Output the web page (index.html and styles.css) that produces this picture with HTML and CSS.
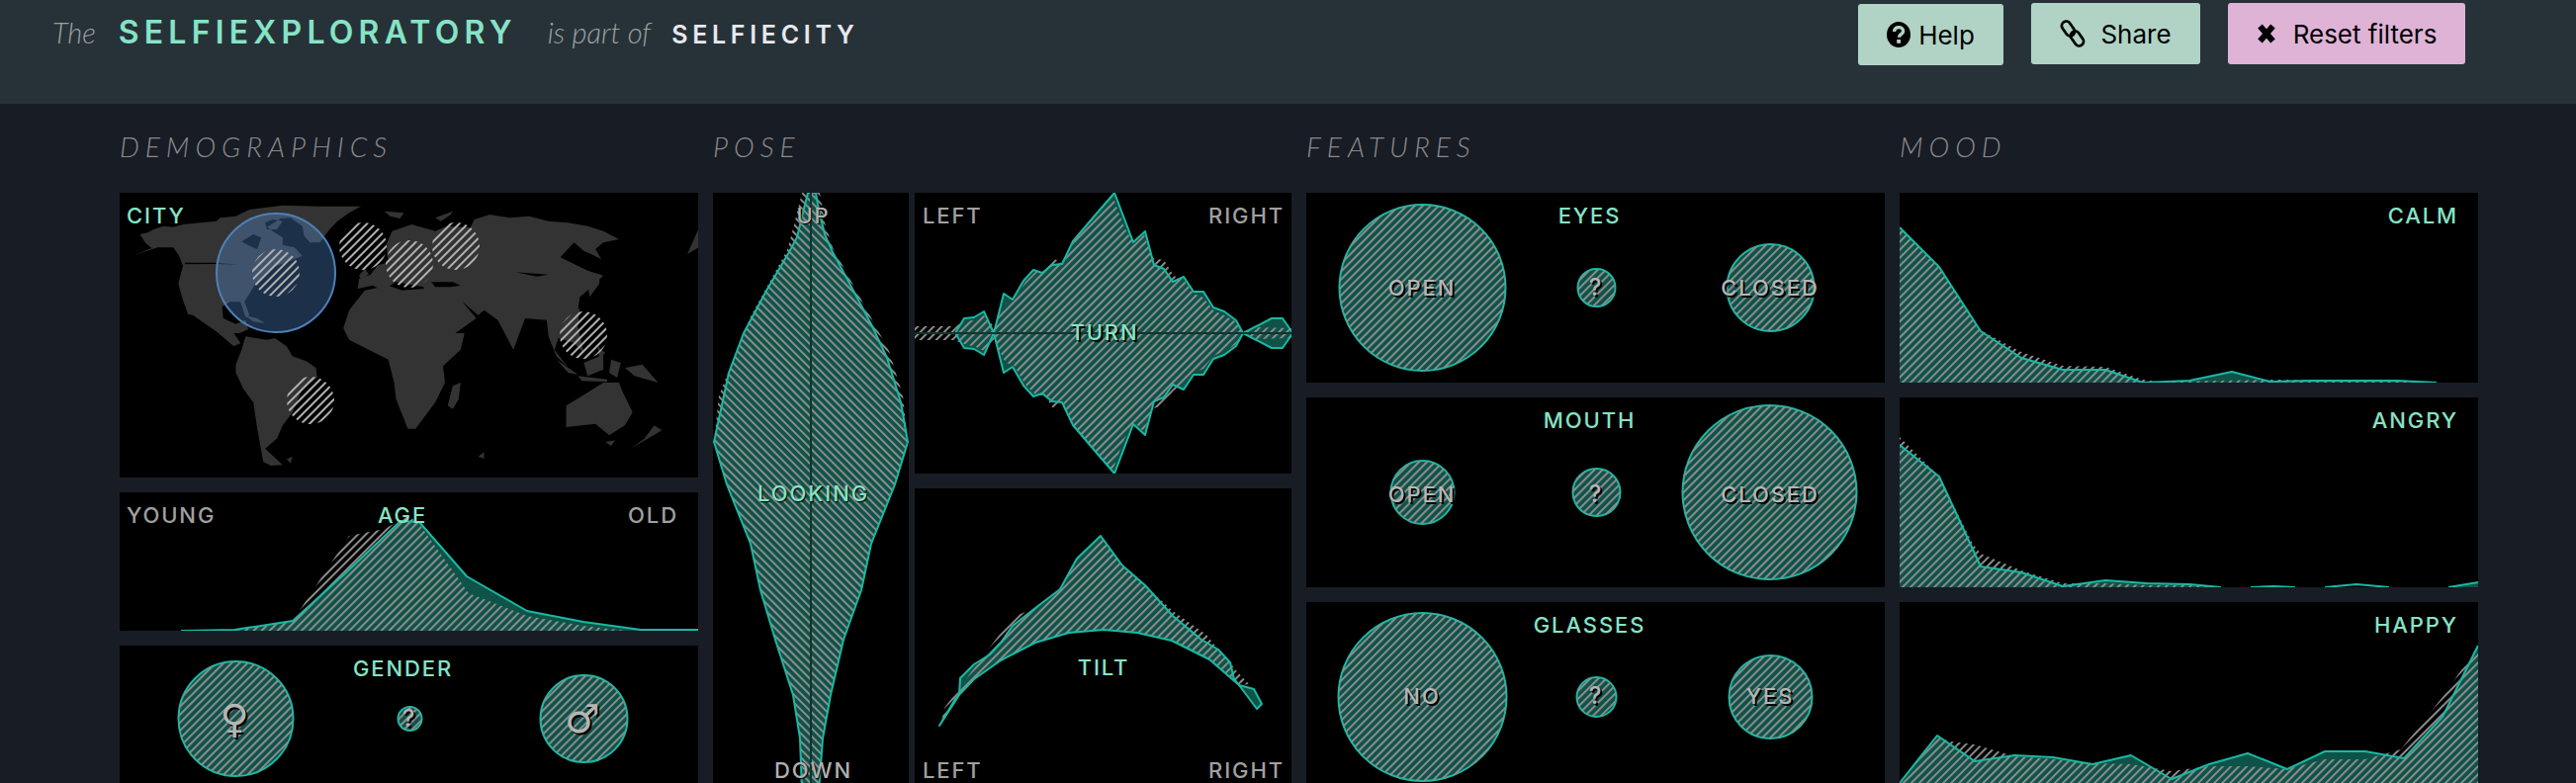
FILE: index.html
```html
<!DOCTYPE html>
<html lang="en">
<head>
  <meta charset="UTF-8" />
  <title>Selfiexploratory</title>
  <link rel="stylesheet" href="styles.css">
</head>
<body>
  <svg class="defs" width="0" height="0">
    <defs>
      <pattern id="hatch" width="5.7" height="5.7" patternUnits="userSpaceOnUse" patternTransform="rotate(45)">
        <rect width="2" height="5.7" fill="#8c8c8c" />
      </pattern>
      <pattern id="hatch-back" width="5.7" height="5.7" patternUnits="userSpaceOnUse" patternTransform="rotate(-45)">
        <rect width="2" height="5.7" fill="#8c8c8c" />
      </pattern>
      <pattern id="hatch-map" width="6" height="6" patternUnits="userSpaceOnUse" patternTransform="rotate(45)">
        <rect width="2" height="6" fill="#b0b0b0" />
      </pattern>
    </defs>
  </svg>

  <header class="topbar">
    <div class="title">
      <span class="title-note">The</span>
      <span class="title-main">SELFIEXPLORATORY</span>
      <span class="title-note">is part of</span>
      <span class="title-parent">SELFIECITY</span>
    </div>
    <div class="actions">
      <button class="btn btn-help">
        <svg class="icon" width="24" height="28" viewBox="0 0 24 28"><ellipse cx="12" cy="14" rx="12" ry="13" /><path class="icon-cut" d="M7.5 11c.3-3 2.2-4.4 4.6-4.4 2.6 0 4.5 1.6 4.5 3.8 0 3.3-4.2 3.3-4.2 6.4" /><rect class="icon-dot" x="10.2" y="19" width="3.8" height="3.8" /></svg>
        Help
      </button>
      <button class="btn btn-share">
        <svg class="icon icon-line" width="26" height="28" viewBox="0 0 26 28"><rect x="4" y="1" width="9" height="16" rx="4.5" transform="rotate(-35 8.5 9)" /><rect x="13" y="11" width="9" height="16" rx="4.5" transform="rotate(-35 17.5 19)" /></svg>
        Share
      </button>
      <button class="btn btn-reset">
        <svg class="icon icon-x" width="20" height="28" viewBox="0 0 20 28"><path d="M3.5 6.5l13 15M16.5 6.5l-13 15" /></svg>
        Reset filters
      </button>
    </div>
  </header>

  <main class="board">
    <section class="group">
      <h2>DEMOGRAPHICS</h2>
      <div class="stack">
        <div class="panel panel-map">
          <svg class="chart" viewBox="0 0 585 288">
            <g class="land" transform="scale(.3954 .3333) translate(-53 -14)">
              <path fill-rule="evenodd" d="M92 203L135 182 118 165 105 140 125 135 140 125 165 115 190 118 215 110 260 105 300 100 310 90 350 85 385 65 420 60 470 52 560 55 670 55 640 75 610 100 590 125 565 165 540 165 525 145 520 115 490 90 465 92 430 118 450 135 470 150 470 172 500 180 520 205 480 225 445 240 430 258 400 290 385 320 372 345 385 385 375 392 362 345 335 345 315 360 318 395 350 412 375 400 382 428 360 440 345 440 362 470 345 480 300 435 270 410 240 385 228 382 215 340 203 290 215 235 205 205 190 180 150 180ZM365 162L395 140 415 150 405 185 385 175ZM220 226L300 226 360 232 300 230 220 231ZM425 105L445 95 470 100 455 125 430 125Z" />
              <path d="M372 385L405 395 425 410 395 405Z" />
              <path d="M375 450L430 460 450 455 480 480 495 510 530 525 555 545 558 575 520 610 505 650 495 680 470 720 455 760 425 790 470 840 440 842 420 830 405 730 395 650 370 610 350 560 350 535 365 490Z" />
              <path d="M640 370L680 310 740 295 775 310 830 305 860 320 875 370 890 400 900 440 935 440 925 490 880 540 885 590 860 650 810 730 790 730 760 640 755 590 740 520 690 490 640 460 625 425Z" />
              <path d="M905 600L925 590 920 640 905 670 892 660Z" />
              <path fill-rule="evenodd" d="M662 305L665 275 695 262 712 235 740 225 735 170 750 130 800 110 860 130 890 115 950 120 960 95 1000 80 1050 90 1100 85 1150 100 1200 105 1250 115 1290 130 1330 155 1290 165 1270 185 1285 215 1240 190 1215 165 1180 210 1250 250 1290 265 1260 300 1230 330 1225 370 1230 360 1225 420 1240 500 1215 470 1175 455 1165 490 1200 545 1170 510 1150 450 1145 400 1090 395 1060 490 1020 400 985 370 970 385 930 345 965 395 900 450 880 400 860 330 835 325 830 300 760 285 725 310 700 295ZM850 285L905 285 925 295 900 300 860 300ZM1065 255L1150 262 1120 268Z" />
              <path d="M1250 290L1280 260 1280 290 1255 330Z" />
              <path d="M665 265L680 245 690 260 672 280Z" />
              <path d="M1505 200L1533 125 1533 180Z" />
              <path d="M730 70L780 75 770 92 745 85Z" />
              <path d="M860 90L905 70 900 80 875 100Z" />
              <path d="M1140 480L1200 560 1225 565 1170 520Z" />
              <path d="M1225 570L1300 580 1300 588 1235 585Z" />
              <path d="M1240 530L1290 505 1290 550 1250 570Z" />
              <path d="M1310 520L1335 530 1325 575 1305 560Z" />
              <path d="M1275 480L1295 500 1280 515Z" />
              <path d="M1345 545L1390 535 1430 590 1370 570Z" />
              <path d="M1195 660L1250 620 1290 590 1330 590 1340 620 1365 680 1345 720 1305 750 1270 715 1195 725Z" />
              <path d="M1360 790L1440 735 1420 720 1395 760Z" />
              <path d="M1295 770L1320 765 1310 782Z" />
              <path d="M970 815L985 800 985 820Z" />
              <path d="M480 822L495 815 490 835Z" />
            </g>
            <circle class="city-pick" cx="158" cy="81" r="60" />
            <g class="city-spot">
              <circle cx="158" cy="81" r="24" />
              <circle cx="246" cy="54" r="24" />
              <circle cx="293" cy="72" r="24" />
              <circle cx="340" cy="54" r="24" />
              <circle cx="469" cy="144" r="24" />
              <circle cx="193" cy="210" r="24" />
            </g>
          </svg>
          <div class="labels"><span class="mint">CITY</span><span></span><span></span></div>
        </div>

        <div class="panel panel-age">
          <svg class="chart" viewBox="0 0 585 140">
            <path class="area" d="M62 140L116 139 175 130 228 82 284 29 303 30 351 85 412 120 469 131 527 139 585 139 585 140Z" />
            <path class="hatch" d="M116 140L175 130 232 44 268 37 292 24 303 32 353 102 412 125 469 135 513 140Z" />
            <path class="line" d="M62 140L116 139 175 130 228 82 284 29 303 30 351 85 412 120 469 131 527 139 585 139" />
          </svg>
          <div class="labels"><span>YOUNG</span><span class="mint">AGE</span><span class="end">OLD</span></div>
        </div>

        <div class="panel panel-short">
          <svg class="chart" viewBox="0 0 585 148">
            <g class="bubble">
              <circle cx="117" cy="74" r="58" /><circle class="hatch" cx="117" cy="74" r="58" />
              <circle cx="293" cy="74" r="12" /><circle class="hatch" cx="293" cy="74" r="12" />
              <circle cx="469" cy="74" r="44" /><circle class="hatch" cx="469" cy="74" r="44" />
            </g>
          </svg>
          <div class="labels"><span></span><span class="mint">GENDER</span><span></span></div>
          <div class="marks">
            <span class="mark mark-glyph">♀</span><span class="mark mark-q">?</span><span class="mark mark-glyph">♂</span>
          </div>
        </div>
      </div>
    </section>

    <section class="group">
      <h2>POSE</h2>
      <div class="pose">
        <div class="panel panel-looking">
          <svg class="chart" viewBox="0 0 198 606">
            <path class="area" d="M99 0L104 0 106 12 113 42 121 60 142 99 161 135 176 167 190 212 197 252 184 295 160 355 150 402 132 452 119 508 111 552 107 606 90 606 88 552 81 508 63 452 48 402 38 355 14 295 1 252 16 182 31 142 54 99 77 60 85 45 92 16 96 0Z" />
            <path class="hatch-b" d="M90 0L108 0 113 30 121 55 162 130 178 160 192 205 197 252 184 295 160 355 150 402 132 452 119 508 111 552 107 606 90 606 88 552 81 508 63 452 48 402 38 355 14 295 1 252 6 205 24 160 38 125 75 58 80 40Z" />
            <path class="line" d="M99 0L104 0 106 12 113 42 121 60 142 99 161 135 176 167 190 212 197 252 184 295 160 355 150 402 132 452 119 508 111 552 107 606 90 606 88 552 81 508 63 452 48 402 38 355 14 295 1 252 16 182 31 142 54 99 77 60 85 45 92 16 96 0Z" />
            <path class="axis" d="M99 0V606" />
          </svg>
          <div class="pose-labels">
            <span>UP</span>
            <span class="mint shadow">LOOKING</span>
            <span>DOWN</span>
          </div>
        </div>
        <div class="pose-side">
          <div class="panel panel-turn">
            <svg class="chart" viewBox="0 0 381 284">
              <path class="area" d="M41 142L50 127 60 126 70 120 80 142 90 102 99 108 110 89 120 78 129 81 139 73 149 72 160 49 183 22 202 0 221 50 233 39 242 73 252 77 261 90 272 85 282 100 292 100 302 116 313 120 325 129 332 142 361 127 372 127 381 140 381 144 372 157 361 157 332 142 325 155 313 164 302 168 292 184 282 184 272 199 261 194 252 207 242 211 233 245 221 234 202 284 183 262 160 235 149 212 139 211 129 203 120 206 110 195 99 176 90 182 80 142 70 164 60 158 50 157Z" />
              <path class="hatch" d="M0 135L40 135 50 131 62 128 70 124 80 135 92 112 100 110 112 90 122 80 132 78 140 66 150 72 162 47 185 20 200 3 212 35 222 52 232 42 240 66 252 68 262 84 272 88 282 102 292 106 302 119 313 124 324 130 332 142 345 136 381 137 381 147 345 148 332 142 324 154 313 160 302 165 292 178 282 182 272 196 262 200 252 216 240 218 232 242 222 232 212 249 200 281 185 264 162 237 150 212 140 218 132 206 122 204 112 194 100 174 92 172 80 149 70 160 62 156 50 153 40 149 0 149Z" />
              <path class="line" d="M41 142L50 127 60 126 70 120 80 142 90 102 99 108 110 89 120 78 129 81 139 73 149 72 160 49 183 22 202 0 221 50 233 39 242 73 252 77 261 90 272 85 282 100 292 100 302 116 313 120 325 129 332 142 361 127 372 127 381 140 381 144 372 157 361 157 332 142 325 155 313 164 302 168 292 184 282 184 272 199 261 194 252 207 242 211 233 245 221 234 202 284 183 262 160 235 149 212 139 211 129 203 120 206 110 195 99 176 90 182 80 142 70 164 60 158 50 157Z" />
              <path class="axis" d="M0 142H381" />
            </svg>
            <div class="labels labels-wide"><span>LEFT</span><span></span><span class="end">RIGHT</span></div>
            <div class="label-middle mint shadow">TURN</div>
          </div>
          <div class="panel panel-tilt">
            <svg class="chart" viewBox="0 0 381 307">
              <path class="area" d="M25 240L45 209 46 192 60 178 76 168 87 156 99 139 122 121 147 102 164 71 188 48 210 78 233 98 261 129 290 153 307 163 319 176 323 193 328 199 343 203 351 218 346 223 328 199 298 173 260 154 225 146 191 143 156 146 122 156 87 174 60 193 41 213Z" />
              <path class="hatch" d="M30 222L99 130 122 121 147 102 164 71 188 48 210 78 233 98 261 124 295 148 307 163 319 176 324 183 338 198 328 199 298 173 260 154 225 146 191 143 156 146 122 156 87 174 60 193 41 213 27 236Z" />
              <path class="line" d="M25 240L45 209 46 192 60 178 76 168 87 156 99 139 122 121 147 102 164 71 188 48 210 78 233 98 261 129 290 153 307 163 319 176 323 193 328 199 343 203 351 218 346 223 328 199 298 173 260 154 225 146 191 143 156 146 122 156 87 174 60 193 41 213Z" />
            </svg>
            <div class="tilt-labels">
              <div class="label-tilt mint">TILT</div>
              <div class="labels-foot"><span>LEFT</span><span>RIGHT</span></div>
            </div>
          </div>
        </div>
      </div>
    </section>

    <section class="group">
      <h2>FEATURES</h2>
      <div class="rows">
        <div class="panel">
          <svg class="chart" viewBox="0 0 585 192">
            <g class="bubble">
              <circle cx="117" cy="96" r="84" /><circle class="hatch" cx="117" cy="96" r="84" />
              <circle cx="293" cy="96" r="19" /><circle class="hatch" cx="293" cy="96" r="19" />
              <circle cx="469" cy="96" r="44" /><circle class="hatch" cx="469" cy="96" r="44" />
            </g>
          </svg>
          <div class="labels"><span></span><span class="mint">EYES</span><span></span></div>
          <div class="marks"><span class="mark">OPEN</span><span class="mark mark-q">?</span><span class="mark">CLOSED</span></div>
        </div>
        <div class="panel">
          <svg class="chart" viewBox="0 0 585 192">
            <g class="bubble">
              <circle cx="117" cy="96" r="32" /><circle class="hatch" cx="117" cy="96" r="32" />
              <circle cx="293" cy="96" r="24" /><circle class="hatch" cx="293" cy="96" r="24" />
              <circle cx="468" cy="96" r="88" /><circle class="hatch" cx="468" cy="96" r="88" />
            </g>
          </svg>
          <div class="labels"><span></span><span class="mint">MOUTH</span><span></span></div>
          <div class="marks marks-low"><span class="mark">OPEN</span><span class="mark mark-q">?</span><span class="mark">CLOSED</span></div>
        </div>
        <div class="panel">
          <svg class="chart" viewBox="0 0 585 192">
            <g class="bubble">
              <circle cx="117" cy="96" r="85" /><circle class="hatch" cx="117" cy="96" r="85" />
              <circle cx="293" cy="96" r="20" /><circle class="hatch" cx="293" cy="96" r="20" />
              <circle cx="469" cy="96" r="42" /><circle class="hatch" cx="469" cy="96" r="42" />
            </g>
          </svg>
          <div class="labels"><span></span><span class="mint">GLASSES</span><span></span></div>
          <div class="marks marks-high"><span class="mark">NO</span><span class="mark mark-q">?</span><span class="mark">YES</span></div>
        </div>
      </div>
    </section>

    <section class="group">
      <h2>MOOD</h2>
      <div class="rows">
        <div class="panel">
          <svg class="chart" viewBox="0 0 585 192">
            <path class="area" d="M0 35L40 75 82 140 123 167 165 179 208 179 246 192 293 190 336 181 375 191 416 190 503 190 543 192 585 192 585 192 0 192Z" />
            <path class="hatch" d="M0 35L40 75 82 139 123 161 165 175 208 176 246 189 262 191 385 189 542 191 542 192 0 192Z" />
            <path class="line" d="M0 35L40 75 82 140 123 167 165 179 208 179 246 192 293 190 336 181 375 191 416 190 503 190 543 192" />
          </svg>
          <div class="labels"><span></span><span></span><span class="end mint">CALM</span></div>
        </div>
        <div class="panel">
          <svg class="chart" viewBox="0 0 585 192">
            <path class="area" d="M0 48L40 80 82 171 123 177 165 191 208 185 250 188 293 189 325 192 585 192 585 187 555 192 0 192Z" />
            <path class="hatch" d="M0 40L40 80 74 148 82 158 123 175 165 188 208 188 250 190 293 190 320 192 0 192Z" />
            <path class="line" d="M0 48L40 80 82 171 123 177 165 191 208 185 250 188 293 189 325 192M355 192L378 191 400 192M430 192L462 189 495 192M555 192L585 187" />
          </svg>
          <div class="labels"><span></span><span></span><span class="end mint">ANGRY</span></div>
        </div>
        <div class="panel">
          <svg class="chart" viewBox="0 0 585 192">
            <path class="area" d="M0 183L38 135 76 161 116 155 155 157 195 164 234 155 275 179 313 164 352 153 392 169 430 151 471 151 510 158 549 116 585 44 585 192 0 192Z" />
            <path class="hatch" d="M0 183L38 137 52 141 76 144 116 156 155 159 195 163 234 164 275 171 313 166 352 166 392 169 430 159 471 159 507 149 549 96 585 44 585 192 0 192Z" />
            <path class="line" d="M0 183L38 135 76 161 116 155 155 157 195 164 234 155 275 179 313 164 352 153 392 169 430 151 471 151 510 158 549 116 585 44" />
          </svg>
          <div class="labels"><span></span><span></span><span class="end mint">HAPPY</span></div>
        </div>
      </div>
    </section>
  </main>
</body>
</html>
```

FILE: styles.css
```css
* {
  box-sizing: border-box;
}

html, body {
  height: 100%;
}

body {
  margin: 0;
  overflow: hidden;
  background: #181c25;
  color: #a0a0a0;
  font-family: Inter, Lato, sans-serif;
}

.defs {
  display: block;
  height: 0;
}

/* top bar */
.topbar {
  height: 105px;
  background: #263238;
  display: flex;
  justify-content: space-between;
  align-items: flex-start;
  padding: 0 112px 0 53px;
}

.title {
  display: flex;
  align-items: baseline;
  height: 60px;
  padding-top: 13px;
  white-space: nowrap;
}

.title-note {
  font-family: Lato, sans-serif;
  font-size: 29px;
  font-style: italic;
  font-weight: 300;
  color: #a0a0a0;
}

.title-main {
  margin: 0 31px 0 23px;
  font-size: 32px;
  font-weight: 600;
  letter-spacing: 5.2px;
  color: #86e3c5;
}

.title-parent {
  margin-left: 21px;
  font-size: 25px;
  font-weight: 600;
  letter-spacing: 4.7px;
  color: #e8e8ee;
}

.actions {
  display: flex;
  gap: 28px;
  padding-top: 3px;
}

.btn {
  display: flex;
  align-items: center;
  justify-content: center;
  height: 62px;
  border: none;
  border-radius: 3px;
  background: #b0d3c6;
  color: #000;
  font: 400 26px Inter, Lato, sans-serif;
}

.btn-help {
  width: 147px;
  margin-top: 1px;
  gap: 8px;
}

.btn-share {
  width: 171px;
  gap: 15px;
}

.btn-reset {
  width: 240px;
  gap: 17px;
  background: #deb3d6;
}

.icon {
  flex: none;
}

.icon-cut {
  fill: none;
  stroke: #b0d3c6;
  stroke-width: 3.4;
}

.icon-dot {
  fill: #b0d3c6;
}

.icon-line rect {
  fill: none;
  stroke: #000;
  stroke-width: 2.8;
}

.icon-x path {
  fill: none;
  stroke: #000;
  stroke-width: 6;
}

/* dashboard */
.board {
  display: flex;
  gap: 15px;
  padding-left: 121px;
}

.group {
  width: 585px;
  flex: none;
}

.group h2 {
  margin: 0;
  height: 90px;
  padding-top: 26px;
  font-family: Lato, sans-serif;
  font-size: 28px;
  line-height: 34px;
  font-style: italic;
  font-weight: 300;
  letter-spacing: 6px;
  color: #8a8a8a;
}

.stack {
  display: grid;
  grid-template-rows: 288px 140px 148px;
  gap: 15px;
}

.rows {
  display: grid;
  grid-template-rows: repeat(3, 192px);
  gap: 15px;
}

.pose {
  display: grid;
  grid-template-columns: 198px 381px;
  gap: 6px;
  height: 606px;
}

.pose-side {
  display: grid;
  grid-template-rows: 284px 307px;
  gap: 15px;
}

/* chart and labels sit in the same grid cell */
.panel {
  display: grid;
  background: #000;
  overflow: hidden;
  font-size: 22px;
  font-weight: 500;
  letter-spacing: 1.9px;
  line-height: 26px;
}

.panel > * {
  grid-area: 1 / 1;
}

.chart {
  display: block;
  width: 100%;
  height: 100%;
}

.labels {
  display: grid;
  grid-template-columns: 1fr auto 1fr;
  align-self: start;
  padding: 10px 20px 0 7px;
}

.labels-wide {
  padding: 10px 7px 0 8px;
}

.end {
  text-align: right;
}

.mint {
  color: #86e3c5;
}

.shadow {
  text-shadow: 2px 2px 1px #000;
}

.marks {
  display: grid;
  grid-template-columns: 234px 118px 234px;
  align-items: center;
  text-align: center;
}

.marks-low {
  padding-top: 4px;
}

.marks-high {
  padding-bottom: 3px;
}

.mark {
  color: #b5b5b5;
  text-shadow: 2px 2px 0 #000;
}

.mark-q {
  font-size: 24px;
}

.mark-glyph {
  font-family: "DejaVu Sans", sans-serif;
  font-size: 40px;
  line-height: 40px;
}

.pose-labels {
  display: flex;
  flex-direction: column;
  justify-content: space-between;
  align-items: center;
  padding: 10px 0 9px 5px;
  color: #b0b0b0;
}

.pose-labels span {
  text-shadow: 1px 1px 1px #000;
}

.label-middle {
  align-self: center;
  justify-self: center;
  padding: 0 0 3px 3px;
}

.tilt-labels {
  display: flex;
  flex-direction: column;
  padding: 168px 7px 9px 8px;
}

.label-tilt {
  text-align: center;
  flex: 1;
}

.labels-foot {
  display: flex;
  justify-content: space-between;
}

/* svg parts */
.land path {
  fill: #333;
}

.city-pick {
  fill: rgba(97, 160, 243, 0.3);
  stroke: #4d80b8;
  stroke-width: 2;
}

.city-spot circle {
  fill: url(#hatch-map);
}

.area {
  fill: #0e5248;
}

.hatch {
  fill: url(#hatch);
}

.hatch-b {
  fill: url(#hatch-back);
}

.line {
  fill: none;
  stroke: #1ab8a3;
  stroke-width: 2;
  stroke-linejoin: round;
}

.axis {
  fill: none;
  stroke: #12332e;
  stroke-width: 2;
}

.bubble circle {
  fill: #0e5248;
  stroke: #1ab8a3;
  stroke-width: 2;
}

.bubble circle.hatch {
  fill: url(#hatch);
  stroke: none;
}
```
